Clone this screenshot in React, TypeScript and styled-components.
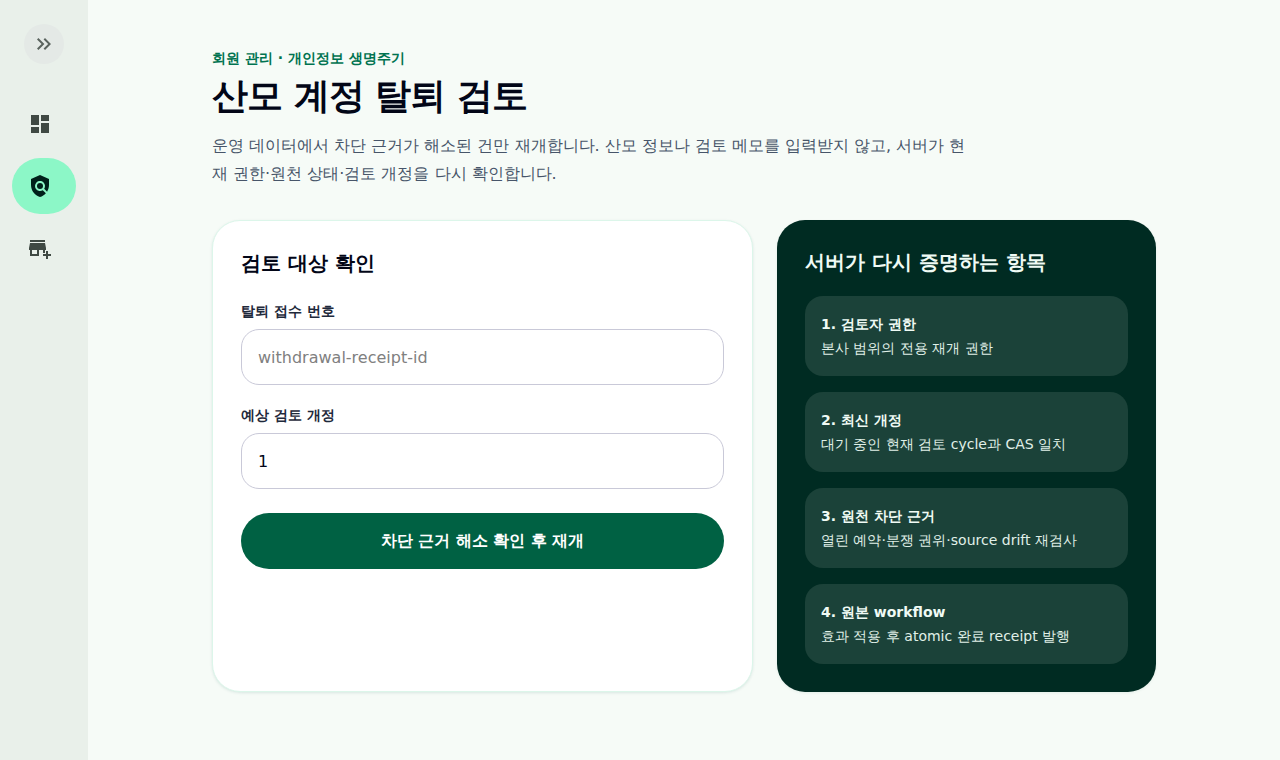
import React from 'react';
import styled, { createGlobalStyle } from 'styled-components';

const GlobalStyle = createGlobalStyle`
  * {
    box-sizing: border-box;
  }
  html,
  body {
    margin: 0;
    height: 100%;
  }
  body {
    background-color: #f6fbf7;
    color: #020617;
    font-family: 'DejaVu Sans', sans-serif;
  }
`;

const Shell = styled.div`
  display: flex;
  min-height: 760px;
`;

const Rail = styled.nav`
  width: 88px;
  flex-shrink: 0;
  background-color: #e9f0ea;
  display: flex;
  flex-direction: column;
  align-items: center;
  padding-top: 24px;
`;

const ToggleButton = styled.button`
  width: 40px;
  height: 40px;
  border: none;
  border-radius: 50%;
  background-color: #e4e9e6;
  color: #5a635e;
  display: flex;
  align-items: center;
  justify-content: center;
  padding: 0;
  margin-bottom: 32px;
`;

const RailItem = styled.a<{ $active?: boolean }>`
  width: 64px;
  height: 56px;
  margin-bottom: 6px;
  padding-left: 16px;
  border-radius: 28px;
  display: flex;
  align-items: center;
  color: ${p => (p.$active ? '#00201a' : '#3f4943')};
  background-color: ${p => (p.$active ? '#8cf7c7' : 'transparent')};
`;

const Main = styled.main`
  flex: 1;
  padding: 48px 124px 0;
`;

const Eyebrow = styled.p`
  margin: 0;
  font-size: 14px;
  line-height: 20px;
  font-weight: 700;
  color: #007350;
`;

const Title = styled.h1`
  margin: 6px 0 0;
  font-size: 36px;
  line-height: 44px;
  font-weight: 700;
  letter-spacing: -1px;
`;

const Lead = styled.p`
  margin: 14px 0 0;
  max-width: 760px;
  font-size: 16px;
  line-height: 28px;
  color: #475569;
`;

const Columns = styled.div`
  display: grid;
  grid-template-columns: 541px 379px;
  gap: 24px;
  margin-top: 32px;
  height: 472px;
`;

const FormCard = styled.form`
  background-color: #fff;
  border: 1px solid #dcf6ea;
  border-radius: 28px;
  box-shadow: 0 1px 3px rgba(0, 90, 80, 0.12);
  padding: 27px 28px;
  display: flex;
  flex-direction: column;
  gap: 20px;
`;

const CardTitle = styled.h2`
  margin: 0 0 3px;
  font-size: 20px;
  line-height: 30px;
  font-weight: 700;
`;

const Field = styled.label`
  display: flex;
  flex-direction: column;
  gap: 8px;
`;

const FieldLabel = styled.span`
  font-size: 14px;
  line-height: 20px;
  font-weight: 700;
  color: #1e293b;
`;

const TextInput = styled.input`
  width: 100%;
  height: 56px;
  border: 1px solid #c9c9d8;
  border-radius: 18px;
  padding: 0 16px;
  background-color: #fff;
  color: #020617;
  font: inherit;
  font-size: 16px;
  &::placeholder {
    color: #808080;
    opacity: 1;
  }
`;

const SubmitButton = styled.button`
  height: 56px;
  margin-top: 4px;
  border: none;
  border-radius: 28px;
  background-color: #006143;
  color: #fff;
  font: inherit;
  font-size: 16px;
  font-weight: 700;
`;

const ProofPanel = styled.aside`
  background-color: #002b22;
  border-radius: 28px;
  padding: 28px;
  color: #f0fbf5;
  box-shadow: 0 1px 3px rgba(0, 90, 80, 0.08);
`;

const PanelTitle = styled.h2`
  margin: 0 0 20px;
  font-size: 20px;
  line-height: 28px;
  font-weight: 700;
`;

const ProofList = styled.div`
  display: flex;
  flex-direction: column;
  gap: 16px;
`;

const ProofItem = styled.div`
  height: 80px;
  border-radius: 18px;
  background-color: #1b4239;
  padding: 16px;
  display: flex;
  flex-direction: column;
`;

const ProofName = styled.strong`
  font-size: 14px;
  line-height: 24px;
  font-weight: 700;
`;

const ProofText = styled.span`
  font-size: 14px;
  line-height: 24px;
  color: #e0f0e8;
`;

const Icon = ({ children }: { children: React.ReactNode }) => (
  <svg width={24} height={24} viewBox="0 0 24 24" fill="currentColor">
    {children}
  </svg>
);

const proofs = [
  { name: '1. 검토자 권한', text: '본사 범위의 전용 재개 권한' },
  { name: '2. 최신 개정', text: '대기 중인 현재 검토 cycle과 CAS 일치' },
  { name: '3. 원천 차단 근거', text: '열린 예약·분쟁 권위·source drift 재검사' },
  { name: '4. 원본 workflow', text: '효과 적용 후 atomic 완료 receipt 발행' },
];

export default function App() {
  return (
    <Shell>
      <GlobalStyle />
      <Rail>
        <ToggleButton type="button" aria-label="메뉴 펼치기">
          <Icon>
            <path d="M6.41 6 5 7.41 9.58 12 5 16.59 6.41 18l6-6z" />
            <path d="M13 6l-1.41 1.41L16.17 12l-4.58 4.59L13 18l6-6z" />
          </Icon>
        </ToggleButton>
        <RailItem>
          <Icon>
            <path d="M3 13h8V3H3v10zm0 8h8v-6H3v6zm10 0h8V11h-8v10zm0-18v6h8V3h-8z" />
          </Icon>
        </RailItem>
        <RailItem $active>
          <Icon>
            <path d="M21 5l-9-4-9 4v6c0 5.55 3.84 10.74 9 12 2.3-.56 4.33-1.9 5.88-3.71l-3.12-3.12c-1.94 1.29-4.58 1.07-6.29-.64-1.95-1.95-1.95-5.12 0-7.07 1.95-1.95 5.12-1.95 7.07 0 1.71 1.71 1.92 4.35.64 6.29l2.9 2.9C20.29 15.69 21 13.38 21 11V5z" />
            <circle cx="12" cy="12" r="3" />
          </Icon>
        </RailItem>
        <RailItem>
          <Icon>
            <path d="M15 17h2v-3h1v-2l-1-5H2l-1 5v2h1v6h9v-6h4v3zm-6 1H4v-4h5v4zM2 4h15v2H2z" />
            <path d="M20 18v-3h-2v3h-3v2h3v3h2v-3h3v-2z" />
          </Icon>
        </RailItem>
      </Rail>
      <Main>
        <Eyebrow>회원 관리 · 개인정보 생명주기</Eyebrow>
        <Title>산모 계정 탈퇴 검토</Title>
        <Lead>
          운영 데이터에서 차단 근거가 해소된 건만 재개합니다. 산모 정보나 검토 메모를 입력받지 않고, 서버가 현재 권한·원천 상태·검토 개정을 다시 확인합니다.
        </Lead>
        <Columns>
          <FormCard onSubmit={e => e.preventDefault()}>
            <CardTitle>검토 대상 확인</CardTitle>
            <Field>
              <FieldLabel>탈퇴 접수 번호</FieldLabel>
              <TextInput placeholder="withdrawal-receipt-id" />
            </Field>
            <Field>
              <FieldLabel>예상 검토 개정</FieldLabel>
              <TextInput defaultValue="1" />
            </Field>
            <SubmitButton type="submit">차단 근거 해소 확인 후 재개</SubmitButton>
          </FormCard>
          <ProofPanel>
            <PanelTitle>서버가 다시 증명하는 항목</PanelTitle>
            <ProofList>
              {proofs.map(item => (
                <ProofItem key={item.name}>
                  <ProofName>{item.name}</ProofName>
                  <ProofText>{item.text}</ProofText>
                </ProofItem>
              ))}
            </ProofList>
          </ProofPanel>
        </Columns>
      </Main>
    </Shell>
  );
}
